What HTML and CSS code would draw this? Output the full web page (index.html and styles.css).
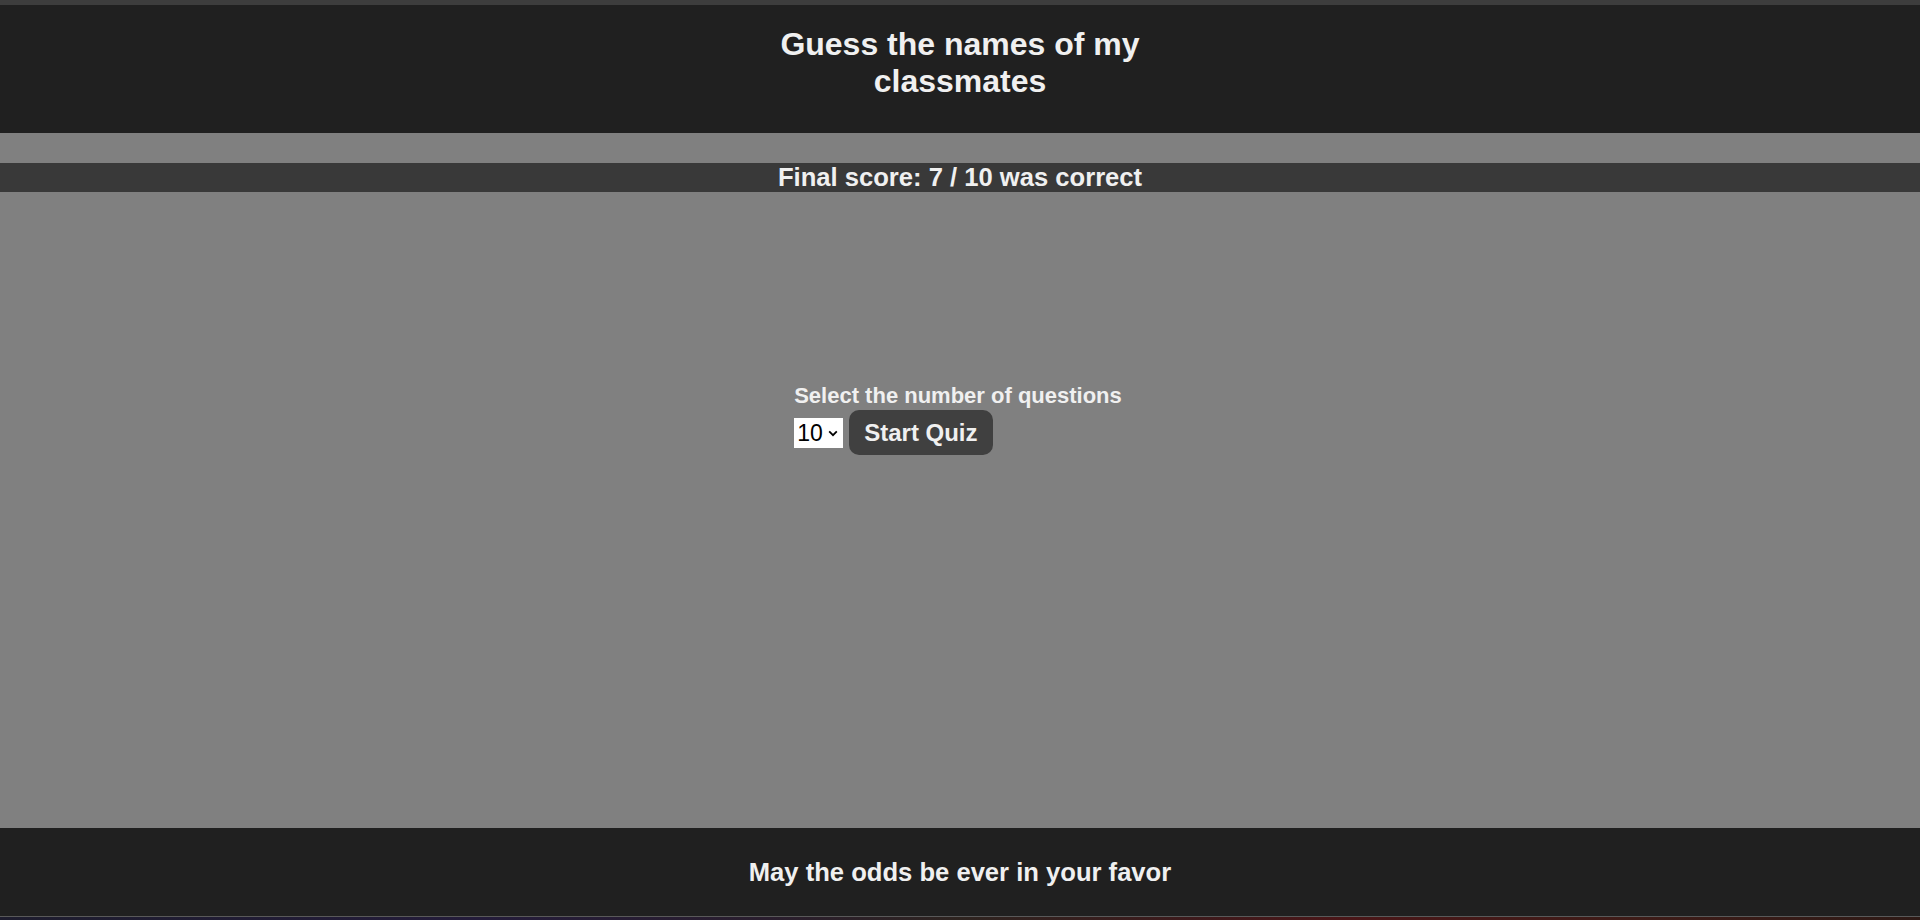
FILE: index.html
```html
<!DOCTYPE html>
<html lang="en">
<head>
<meta charset="utf-8">
<title>Guess the names of my classmates</title>
<link rel="stylesheet" href="styles.css">
</head>
<body>
<div class="topstrip"></div>
<header class="site-header">
  <h1 class="title">Guess the names of my classmates</h1>
</header>
<div class="spacer"></div>
<div class="score">Final score: 7 / 10 was correct</div>
<main class="main">
  <form class="quiz-form">
    <label class="quiz-label" for="count">Select the number of questions</label>
    <div class="quiz-row">
      <div class="select-wrap">
        <select id="count" class="quiz-select">
          <option>5</option>
          <option selected>10</option>
          <option>15</option>
          <option>20</option>
        </select>
        <svg class="chevron" width="10" height="7" viewBox="0 0 10 7"><path d="M1.2 1.4 L5 5.2 L8.8 1.4" fill="none" stroke="#000" stroke-width="1.8"/></svg>
      </div>
      <button type="button" class="start-btn">Start Quiz</button>
    </div>
  </form>
</main>
<footer class="site-footer">May the odds be ever in your favor</footer>
<div class="bottomstrip"></div>
</body>
</html>
```

FILE: styles.css
```css
html, body {
  margin: 0;
  padding: 0;
}
body {
  height: 920px;
  display: flex;
  flex-direction: column;
  background: #808080;
  color: #f0f0f0;
  font-family: "Liberation Sans", Arial, Helvetica, sans-serif;
  font-weight: bold;
  overflow: hidden;
}
.topstrip {
  height: 5px;
  background: #3d3d3d;
  flex: none;
}
.site-header {
  flex: none;
  height: 128px;
  box-sizing: border-box;
  padding-top: 21px;
  background: #202020;
}
.title {
  width: 420px;
  margin: 0 auto;
  font-size: 32px;
  line-height: 37px;
  text-align: center;
  font-weight: bold;
}
.spacer {
  flex: none;
  height: 30px;
}
.score {
  flex: none;
  height: 29px;
  line-height: 29px;
  background: #393939;
  font-size: 25.6px;
  text-align: center;
}
.main {
  flex: 1;
  display: flex;
  justify-content: center;
  align-items: flex-start;
  padding-top: 191px;
  box-sizing: border-box;
}
.quiz-form {
  display: flex;
  flex-direction: column;
  align-items: flex-start;
  gap: 2px;
  margin-left: -4px;
}
.quiz-label {
  font-size: 22px;
  line-height: 25px;
}
.quiz-row {
  display: flex;
  align-items: center;
  gap: 6px;
}
.select-wrap {
  position: relative;
  width: 49px;
  height: 30px;
}
.quiz-select {
  appearance: none;
  -webkit-appearance: none;
  width: 49px;
  height: 30px;
  margin: 0;
  border: 0;
  border-radius: 0;
  background: #ffffff;
  color: #000;
  font-family: "Liberation Sans", Arial, sans-serif;
  font-weight: normal;
  font-size: 23px;
  padding: 0 0 0 3px;
  box-sizing: border-box;
}
.chevron {
  position: absolute;
  right: 5px;
  top: 12px;
  pointer-events: none;
}
.start-btn {
  height: 45px;
  padding: 0 15px;
  border: 0;
  border-radius: 10px;
  background: #404040;
  color: #f0f0f0;
  font-family: "Liberation Sans", Arial, sans-serif;
  font-weight: bold;
  font-size: 24px;
}
.site-footer {
  flex: none;
  height: 88px;
  line-height: 88px;
  background: #202020;
  font-size: 25.6px;
  text-align: center;
}
.bottomstrip {
  flex: none;
  height: 3px;
  border-top: 1px solid #595959;
  background: linear-gradient(90deg, #1e1d2e 0%, #241c3a 25%, #2a1e2e 40%, #2e2420 50%, #3d1a1c 62%, #4a1618 70%, #3e1c18 85%, #2e1a16 100%);
}
```
